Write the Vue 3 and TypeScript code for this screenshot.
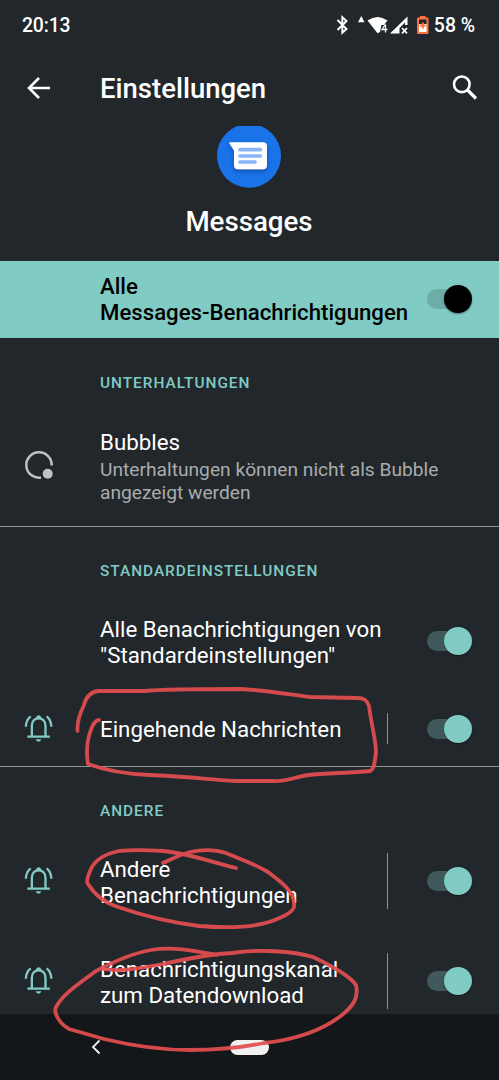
<script setup lang="ts">
interface Channel {
  label: string[]
  size: 'tall' | 'short'
  icon: boolean
}

interface Section {
  title: string
  channels: Channel[]
}

const sections: Section[] = [
  {
    title: 'STANDARDEINSTELLUNGEN',
    channels: [
      { label: ['Alle Benachrichtigungen von', '"Standardeinstellungen"'], size: 'tall', icon: false },
      { label: ['Eingehende Nachrichten'], size: 'short', icon: true },
    ],
  },
  {
    title: 'ANDERE',
    channels: [
      { label: ['Andere', 'Benachrichtigungen'], size: 'tall', icon: true },
      { label: ['Benachrichtigungskanal', 'zum Datendownload'], size: 'tall', icon: true },
    ],
  },
]
</script>

<template>
  <main class="phone">
    <header class="status">
      <span class="clock">20:13</span>
      <svg class="status-icons" width="96" height="24" viewBox="0 0 96 24">
        <path d="M1.500 7 10.500 16 6.300 19.800V4.200L10.500 8 1.500 17" fill="none" stroke="#fff" stroke-width="1.900" />
        <path d="M25.300 3 28.500 9.300H22Z" fill="#fff" />
        <path d="M31.500 7.500Q41.500 .5 51.500 7.500L48 12H45.500L44 19 41.500 20.300Z" fill="#fff" />
        <path d="M49.300 11.500 46 16.500H51.500M49.500 11.500V19.500" fill="none" stroke="#fff" stroke-width="1.300" />
        <path
          d="M54 20.500 71.500 3.500V12H69V9.500L63.500 15V20.500Z"
          fill="#fff"
        />
        <path d="M66 15 71 20.300M71 15 66 20.300" stroke="#fff" stroke-width="1.800" />
        <path d="M84 3H89.500V4.500H91.500Q92.500 4.500 92.500 5.500V20Q92.500 21 91.500 21H82Q81 21 81 20V5.500Q81 4.500 82 4.500H84Z" fill="#ff7043" />
        <path d="M83 6.500H90.500V11H83Z" fill="#22272b" />
        <path d="M83 11H90.500V19H83Z" fill="#fff" />
        <path d="M86.800 9.500V15.500M83.800 12.500H89.800" stroke="#ff7043" stroke-width="2" />
      </svg>
      <span class="battery">58 %</span>
    </header>

    <nav class="toolbar">
      <svg class="back" width="24" height="24" viewBox="0 0 24 24">
        <path d="M23 12H2.500M12 2 2 12 12 22" fill="none" stroke="#fff" stroke-width="2.600" />
      </svg>
      <h1>Einstellungen</h1>
      <svg class="search" width="26" height="26" viewBox="0 0 26 26">
        <circle cx="9.800" cy="9.300" r="7.800" fill="none" stroke="#fff" stroke-width="2.600" />
        <path d="M15.500 15 24 23.500" stroke="#fff" stroke-width="3.200" />
      </svg>
    </nav>

    <section class="app-head">
      <svg class="app-icon" width="64" height="62" viewBox="0 0 64 62">
        <defs>
          <filter id="cardShadow" x="-30%" y="-30%" width="160%" height="180%">
            <feDropShadow dx="0" dy="2.500" stdDeviation="2" flood-color="#003c8f" flood-opacity=".65" />
          </filter>
        </defs>
        <circle cx="32" cy="29.800" r="32" fill="#1a73e8" />
        <path
          d="M13 16.300H46Q50 16.300 50 20.300V39.300Q50 43.300 46 43.300H21Q17 43.300 17 39.300V24.500L12.500 17.500Q12 16.300 13 16.300Z"
          fill="#fff"
          filter="url(#cardShadow)"
        />
        <path d="M23 23.700H43.300M23 30H43.300M23 36H38" stroke="#8ab4f8" stroke-width="3.700" stroke-linecap="round" />
      </svg>
      <h2>Messages</h2>
    </section>

    <section class="banner">
      <p class="label">Alle<br />Messages-Benachrichtigungen</p>
      <span class="switch dark"><i></i></span>
    </section>

    <div class="list">
      <h3>UNTERHALTUNGEN</h3>
      <div class="bubbles">
        <svg class="row-icon" width="34" height="34" viewBox="0 0 34 34">
          <path d="M29.700 17.500A12.700 12.700 0 1 0 19 29.600" fill="none" stroke="#bfc1c2" stroke-width="2.500" />
          <circle cx="25.700" cy="25.800" r="5" fill="#bfc1c2" />
        </svg>
        <div>
          <p class="label">Bubbles</p>
          <p class="summary">Unterhaltungen können nicht als Bubble<br />angezeigt werden</p>
        </div>
      </div>

      <section v-for="section in sections" :key="section.title" class="group">
        <h3>{{ section.title }}</h3>
        <div v-for="channel in section.channels" :key="channel.label[0]" class="row" :class="channel.size">
          <div class="icon-slot">
            <svg v-if="channel.icon" width="33.330" height="33.330" viewBox="0 0 100 100">
              <g fill="none" stroke="#80cbc4" stroke-width="7">
                <path d="M29.500 74V42C29.500 27 38 19 50 19S70.500 27 70.500 42V74M16 74H83.500" />
                <path d="M11.500 44Q12 24 26 13M88 44Q87.500 24 74 13" />
              </g>
              <path d="M41 20Q44 10 50 10T59 20ZM41 82H58Q56 89 49.500 89T41 82Z" fill="#80cbc4" />
            </svg>
          </div>
          <p class="label">
            <template v-for="(line, i) in channel.label" :key="line"><br v-if="i > 0" />{{ line }}</template>
          </p>
          <span v-if="channel.icon" class="separator"></span>
          <span class="switch"><i></i></span>
        </div>
      </section>
    </div>

    <footer class="navbar">
      <svg class="nav-back" width="10" height="16" viewBox="0 0 10 16">
        <path d="M8.500 1.500 2 8 8.500 14.500" fill="none" stroke="#f1f1f1" stroke-width="1.800" />
      </svg>
      <span class="home"></span>
    </footer>

    <svg class="marker" width="499" height="1080" viewBox="0 0 499 1080">
      <path d="M77.500 731C77 722 80 713 84 705C86 697 91 692 98 691L145 691C165 689 205 689 240 689C263 690 286 694 310 697L357 698C364 698 367 700 369 706C371 723 376 740 376 752C375 762 374 770 370 771C352 773 327 773 308 775C295 777 285 782 273 781H235C205 779 180 776 150 775C125 774 104 770 88 764C86 752 87 739 92 727C95 721 97 720 99 720" />
      <path d="M236 868C208 861 187 853 163 851C147 850 129 850 119 851C105 854 96 860 92 867C88 874 86 882 88 884C95 895 105 903 118 907C147 917 175 923 199 926C225 928 251 928 269 922C284 917 296 911 294 904C294 891 280 881 268 872C253 863 240 859 226 853C214 849 200 850 190 852C179 855 172 859 163 863" />
      <path d="M103 969C120 972 142 968 163 964C186 959 210 954 232 953C258 949 293 951 313 957C332 966 350 976 356 985C359 998 353 1006 342 1015C319 1033 292 1040 264 1043C240 1048 217 1050 190 1050C160 1050 129 1045 104 1039L69 1029C60 1024 53 1013 56 1007C63 994 77 985 96 971C111 963 134 953 151 950C173 946 196 951 217 955" />
    </svg>
  </main>
</template>

<style>
body {
  background: #22272b;
}
</style>

<style scoped>
.phone {
  position: relative;
  width: 499px;
  height: 1080px;
  overflow: hidden;
  display: flex;
  flex-direction: column;
  background: #22272b;
  color: #fff;
  font-family: Roboto, "Liberation Sans", sans-serif;
}
p, h1, h2, h3 {
  margin: 0;
}
.status {
  height: 50px;
  flex: none;
  display: flex;
  align-items: center;
  padding: 0 24px 0 22px;
  box-sizing: border-box;
  font-size: 19.400px;
  font-weight: 500;
}
.clock {
  letter-spacing: -0.150px;
}
.status-icons {
  margin-left: auto;
  margin-right: 2px;
}
.toolbar {
  height: 76px;
  flex: none;
  display: flex;
  align-items: center;
  padding: 0 21px 1px 27px;
  box-sizing: border-box;
}
.toolbar h1 {
  margin-left: 49px;
  padding-top: 1px;
  font-size: 27.500px;
  font-weight: 500;
}
.search {
  margin-left: auto;
}
.app-head {
  height: 134.500px;
  flex: none;
  display: flex;
  flex-direction: column;
  align-items: center;
  padding-right: 1px;
}
.app-icon {
  margin-right: 1px;
}
.app-head h2 {
  margin-top: 17px;
  font-size: 27.700px;
  line-height: 34px;
  font-weight: 500;
}
.banner {
  height: 77.500px;
  flex: none;
  display: flex;
  align-items: center;
  justify-content: space-between;
  padding: 0 27px 0 100px;
  box-sizing: border-box;
  background: #80cbc4;
  color: #000;
}
.banner .label {
  font-size: 22.200px;
  font-weight: 500;
}
.label {
  font-size: 22.300px;
  line-height: 26px;
  white-space: nowrap;
}
.summary {
  font-size: 19.200px;
  line-height: 23px;
  color: #a9acae;
  margin-top: 3px;
  white-space: nowrap;
}
.list {
  height: 676px;
  flex: none;
  overflow: hidden;
}
h3 {
  height: 64px;
  box-sizing: border-box;
  padding: 34.500px 0 0 100px;
  color: #80cbc4;
  font-size: 15.400px;
  line-height: 20px;
  font-weight: 500;
  letter-spacing: 0.980px;
}
.group h3 {
  padding-top: 33.500px;
}
.bubbles {
  height: 124px;
  box-sizing: border-box;
  display: flex;
  align-items: center;
  padding: 4px 0 0 22px;
}
.row-icon {
  margin: 0 44px 3px 0;
}
.group {
  border-top: 1px solid #8f9394;
}
.row {
  display: flex;
  align-items: center;
  padding-right: 27px;
}
.tall {
  height: 100px;
}
.short {
  height: 75px;
}
.icon-slot {
  width: 78px;
  padding-left: 22px;
  height: 33.330px;
}
.row .label {
  flex: 1;
  padding-top: 1px;
}
.separator {
  width: 1px;
  align-self: stretch;
  margin: 22px 39px 22px 0;
  background: #8d9193;
}
.switch {
  width: 45px;
  height: 28px;
  flex: none;
  display: flex;
  align-items: center;
  justify-content: flex-end;
}
.switch::before {
  content: "";
  width: 36px;
  height: 20px;
  margin-right: -19px;
  border-radius: 10px;
  background: #405a5b;
}
.switch i {
  position: relative;
  width: 28px;
  height: 28px;
  border-radius: 50%;
  background: #80cbc4;
  box-shadow: 0 1px 2px rgba(0, 0, 0, 0.4);
}
.dark::before {
  background: #6daca7;
}
.dark i {
  background: #000;
}
.navbar {
  height: 66px;
  flex: none;
  display: flex;
  align-items: center;
  padding-left: 91px;
  box-sizing: border-box;
  background: #141719;
}
.home {
  width: 39px;
  height: 15px;
  margin-left: 129px;
  border-radius: 8px;
  background: #f1f1f1;
}
.marker {
  position: absolute;
  inset: 0;
  fill: none;
  stroke: #e34f50;
  stroke-opacity: 0.93;
  stroke-width: 3.800;
  stroke-linecap: round;
  stroke-linejoin: round;
  pointer-events: none;
}
</style>
